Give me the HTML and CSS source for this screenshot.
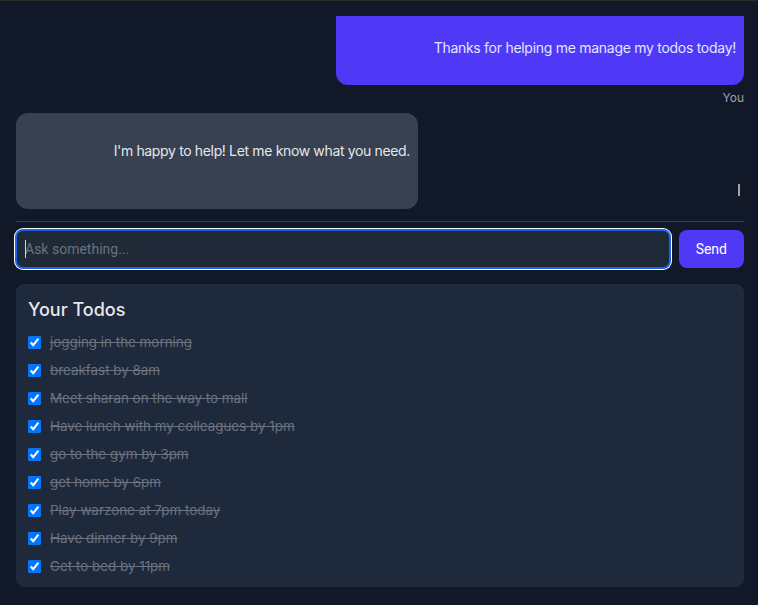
FILE: index.html
```html
<!DOCTYPE html>
<html>
<head>
<meta charset="utf-8">
<link rel="stylesheet" href="styles.css">
</head>
<body>
<div class="app">
  <div class="chat">
    <div class="msg msg-user">
      <div class="bubble bubble-user">Thanks for helping me manage my todos today!</div>
      <div class="who">You</div>
    </div>
    <div class="msg msg-bot">
      <div class="bubble bubble-bot">I'm happy to help! Let me know what you need.</div>
    </div>
    <div class="typing"><span class="caret"></span></div>
  </div>
  <div class="composer">
    <div class="field"><span class="cursor"></span><input class="ask" type="text" placeholder="Ask something..."></div>
    <button class="send">Send</button>
  </div>
  <section class="todos">
    <h2 class="todos-title">Your Todos</h2>
    <ul class="list">
      <li class="item"><input type="checkbox" checked><span class="txt">jogging in the morning</span></li>
      <li class="item"><input type="checkbox" checked><span class="txt">breakfast by 8am</span></li>
      <li class="item"><input type="checkbox" checked><span class="txt">Meet sharan on the way to mall</span></li>
      <li class="item"><input type="checkbox" checked><span class="txt">Have lunch with my colleagues by 1pm</span></li>
      <li class="item"><input type="checkbox" checked><span class="txt">go to the gym by 3pm</span></li>
      <li class="item"><input type="checkbox" checked><span class="txt">get home by 6pm</span></li>
      <li class="item"><input type="checkbox" checked><span class="txt">Play warzone at 7pm today</span></li>
      <li class="item"><input type="checkbox" checked><span class="txt">Have dinner by 9pm</span></li>
      <li class="item"><input type="checkbox" checked><span class="txt">Get to bed by 11pm</span></li>
    </ul>
  </section>
</div>
</body>
</html>
```
FILE: styles.css
```css
* { box-sizing: border-box; }
html, body { margin: 0; padding: 0; height: 100%; }
body {
  background: #111827;
  font-family: Inter, "Noto Sans", sans-serif;
  color: #e5e7eb;
  border-top: 1px solid #2b2b2b;
}
.app {
  padding: 15px 14px 0 16px;
  display: flex;
  flex-direction: column;
}
.chat {
  height: 206px;
  display: flex;
  flex-direction: column;
  border-bottom: 1px solid #374151;
}
.msg { display: flex; flex-direction: column; }
.msg-user { align-items: flex-end; }
.msg-bot { align-items: flex-start; margin-top: 8px; }
.bubble {
  font-size: 14px;
  line-height: 20px;
  text-align: right;
  padding: 0 8px;
}
.bubble-user {
  background: #4f39f6;
  color: #e0e7ff;
  width: 408px;
  height: 69px;
  padding-top: 22px;
  border-radius: 0 0 12px 12px;
  letter-spacing: -0.28px;
}
.who {
  font-size: 12px;
  color: #9ca3af;
  margin-top: 6px;
  line-height: 14px;
}
.bubble-bot {
  background: #374151;
  color: #e5e7eb;
  width: 402px;
  height: 96px;
  padding-top: 28px;
  border-radius: 12px;
  letter-spacing: -0.35px;
}
.typing {
  display: flex;
  justify-content: flex-end;
  margin-top: -25px;
  padding-right: 4px;
}
.caret {
  width: 2px;
  height: 12px;
  background: #9ca3af;
}
.composer {
  display: flex;
  gap: 8px;
  margin-top: 7px;
  margin-left: -1px;
}
.field {
  flex: 1;
  position: relative;
  height: 40px;
  border-radius: 8px;
  border: 2px solid #1d63e8;
  box-shadow: 0 0 0 1px #ffffff;
  background: #1f2937;
  display: flex;
  align-items: center;
}
.cursor {
  position: absolute;
  left: 8px;
  top: 9px;
  width: 1px;
  height: 18px;
  background: #d1d5db;
}
.ask {
  width: 100%;
  background: transparent;
  border: none;
  outline: none;
  font-family: Roboto, sans-serif;
  font-size: 14px;
  color: #e5e7eb;
  padding: 0 8px;
}
.ask::placeholder { color: #6b7280; }
.send {
  background: #4f39f6;
  color: #ffffff;
  border: none;
  border-radius: 8px;
  height: 38px;
  margin-top: 1px;
  padding: 0 17px;
  font-family: Roboto, sans-serif;
  font-size: 14px;
}
.todos {
  margin-top: 15px;
  background: #1e293b;
  border-radius: 8px;
  padding: 14px 12px 8px 12px;
  height: 303px;
}
.todos-title {
  margin: 0 0 6px 0;
  font-size: 18px;
  font-weight: 500;
  line-height: 24px;
  color: #e5e7eb;
}
.list { list-style: none; margin: 0; padding: 0; }
.item {
  display: flex;
  align-items: center;
  height: 28px;
  gap: 9px;
}
.item input {
  margin: 0;
  width: 13px;
  height: 13px;
}
.txt {
  font-size: 13.4px;
  color: #6b7280;
  text-decoration: line-through;
}
```
